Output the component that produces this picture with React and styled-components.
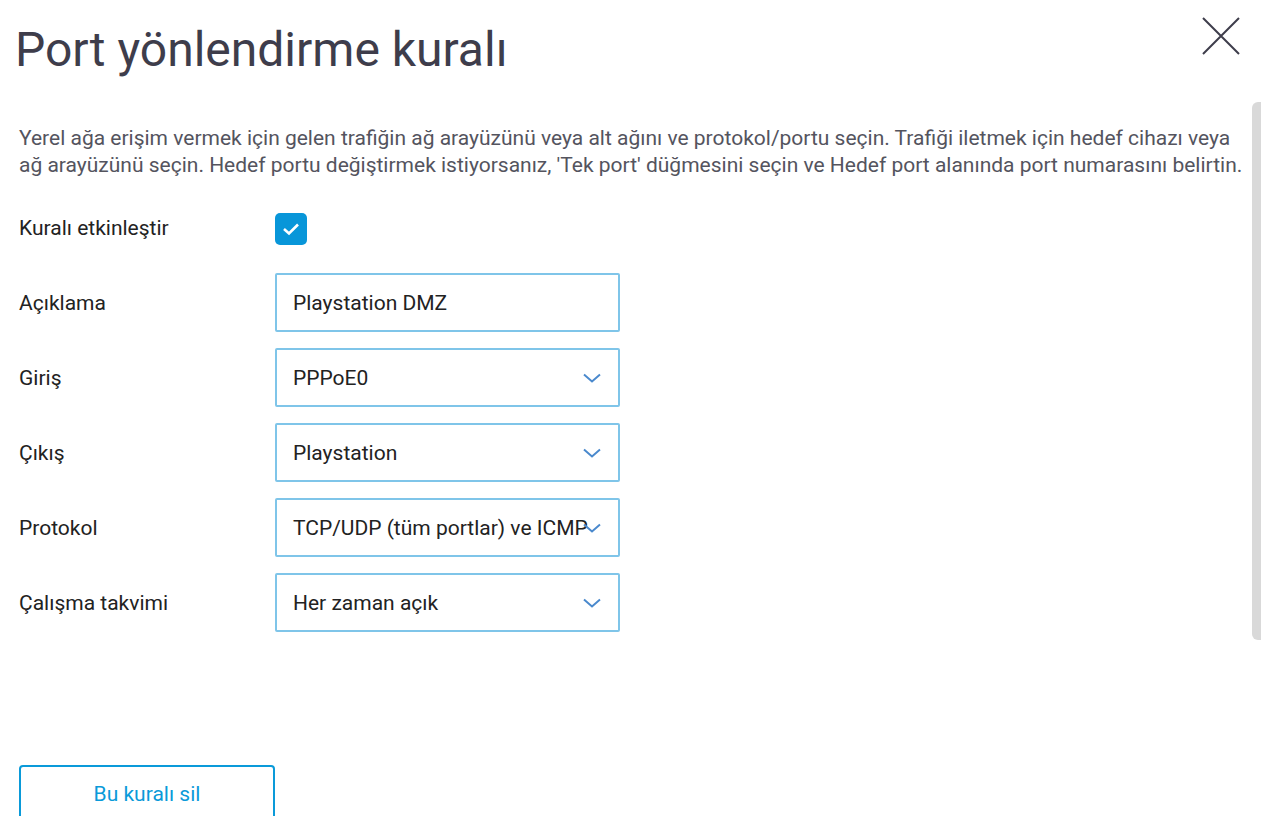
import React from "react"
import styled, { createGlobalStyle } from "styled-components"

const GlobalStyle = createGlobalStyle`
  html, body {
    margin: 0;
    padding: 0;
    background: #fff;
    overflow: hidden;
  }
  body {
    font-family: Roboto, "Liberation Sans", sans-serif;
  }
`

const Page = styled.div`
  position: relative;
  height: 816px;
  overflow: hidden;
  box-sizing: border-box;
  padding: 0 21px 0 19px;
`

const Header = styled.div`
  display: flex;
  justify-content: space-between;
  align-items: flex-start;
  padding-top: 22px;
`

const Title = styled.h1`
  margin: 0 0 0 -4px;
  font-size: 48px;
  line-height: 56px;
  font-weight: 400;
  color: #3e3d4b;
`

const CloseButton = styled.button`
  width: 38px;
  height: 38px;
  margin-top: -5px;
  padding: 0;
  border: none;
  background: none;
  cursor: pointer;
  display: flex;
`

const Description = styled.p`
  margin: 47px -14px 0 0;
  font-size: 21px;
  line-height: 27px;
  color: #54545e;
`

const Form = styled.div`
  display: grid;
  grid-template-columns: 256px 345px;
  grid-auto-rows: 59px;
  row-gap: 16px;
  margin-top: 19px;
`

const Label = styled.div`
  display: flex;
  align-items: center;
  font-size: 21px;
  color: #222;
`

const Cell = styled.div`
  display: flex;
  align-items: center;
`

const Checkbox = styled.span`
  width: 32px;
  height: 32px;
  border-radius: 5px;
  background: #0896d9;
  display: flex;
  align-items: center;
  justify-content: center;
  margin-top: 3px;
`

const Field = styled.div`
  position: relative;
  box-sizing: border-box;
  width: 100%;
  height: 100%;
  border: 2px solid #7fc5e9;
  border-radius: 2px;
  display: flex;
  align-items: center;
  padding: 0 ${(p) => (p.$select ? "33px" : "16px")} 0 16px;
  font-size: 21px;
  color: #222;
  overflow: hidden;
  white-space: nowrap;
`

const Chevron = styled.svg`
  position: absolute;
  right: 17px;
  top: 50%;
  margin-top: -5px;
`

const DeleteButton = styled.button`
  margin-top: 133px;
  width: 256px;
  height: 58px;
  box-sizing: border-box;
  border: 2px solid #0a9ad9;
  border-radius: 4px;
  background: #fff;
  color: #0a9ad9;
  font-family: Roboto, "Liberation Sans", sans-serif;
  font-size: 21px;
  cursor: pointer;
`

const ScrollThumb = styled.div`
  position: absolute;
  right: 0;
  top: 102px;
  width: 9px;
  height: 538px;
  background: #d9d9d9;
  border-radius: 6px 0 0 6px;
`

const ChevronIcon = () => (
  <Chevron width="18" height="10" viewBox="0 0 18 10">
    <path d="M1 1.5 L9 8.5 L17 1.5" fill="none" stroke="#4a89cd" strokeWidth="2" />
  </Chevron>
)

const SelectField = ({ children }) => (
  <Field $select>
    {children}
    <ChevronIcon />
  </Field>
)

const App = () => (
  <>
    <GlobalStyle />
    <Page>
      <Header>
        <Title>Port yönlendirme kuralı</Title>
        <CloseButton aria-label="Kapat">
          <svg width="38" height="38" viewBox="0 0 38 38">
            <path d="M1 1 L37 37 M37 1 L1 37" stroke="#3e3d4b" strokeWidth="2" fill="none" />
          </svg>
        </CloseButton>
      </Header>
      <Description>
        Yerel ağa erişim vermek için gelen trafiğin ağ arayüzünü veya alt ağını ve protokol/portu seçin. Trafiği iletmek
        için hedef cihazı veya ağ arayüzünü seçin. Hedef portu değiştirmek istiyorsanız, 'Tek port' düğmesini seçin ve
        Hedef port alanında port numarasını belirtin.
      </Description>
      <Form>
        <Label>Kuralı etkinleştir</Label>
        <Cell>
          <Checkbox>
            <svg width="18" height="14" viewBox="0 0 18 14">
              <path d="M2 7 L7 11.5 L16 2.5" fill="none" stroke="#fff" strokeWidth="2.6" />
            </svg>
          </Checkbox>
        </Cell>

        <Label>Açıklama</Label>
        <Field>Playstation DMZ</Field>

        <Label>Giriş</Label>
        <SelectField>PPPoE0</SelectField>

        <Label>Çıkış</Label>
        <SelectField>Playstation</SelectField>

        <Label>Protokol</Label>
        <SelectField>TCP/UDP (tüm portlar) ve ICMP</SelectField>

        <Label>Çalışma takvimi</Label>
        <SelectField>Her zaman açık</SelectField>
      </Form>
      <DeleteButton>Bu kuralı sil</DeleteButton>
      <ScrollThumb />
    </Page>
  </>
)

export default App
